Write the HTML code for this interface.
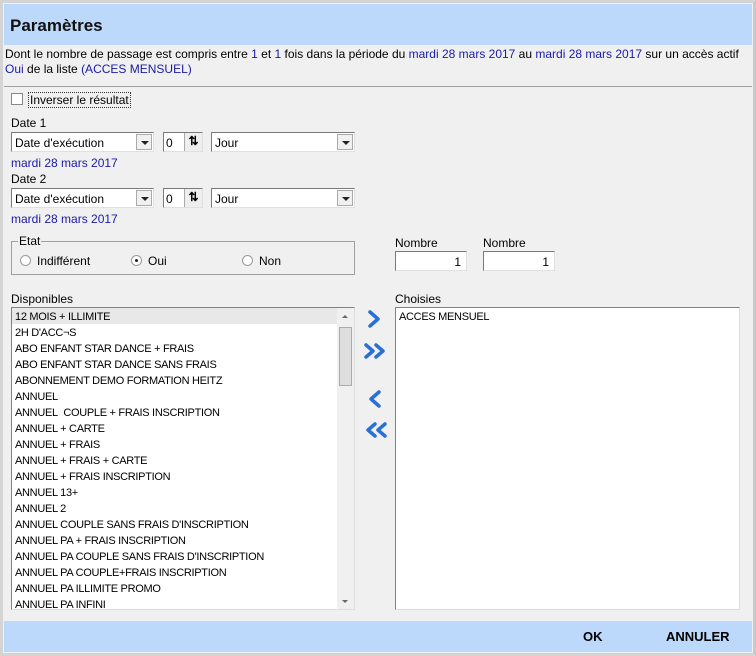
<!DOCTYPE html>
<html><head><meta charset="utf-8"><style>
*{margin:0;padding:0;box-sizing:border-box}
body{width:756px;height:656px;background:#f0f0f0;font-family:"Liberation Sans",sans-serif;font-size:11px;color:#000;position:relative;overflow:hidden}
.a{position:absolute}
.frame{left:0;top:0;width:756px;height:656px;border:3px solid #d4d4d4;border-right-color:#c8c8c8}
.hdr{left:4px;top:4px;width:748px;height:41px;background:#bcd9fb;font-size:17px;font-weight:bold;padding:12px 0 0 6px;color:#111}
.blue{color:#1a1aa8}
.combo{height:20px;background:#fff;border:1px solid #7a7a7a;border-right-color:#e0e0e0;border-bottom-color:#e0e0e0;padding:3px 3px 0;font-size:12px}
.combo .btn{position:absolute;right:1px;top:1px;width:16px;height:16px;background:#f0f0f0;border:1px solid #aaa}
.combo .btn:after{content:"";position:absolute;left:4px;top:6px;border:4px solid transparent;border-top:4px solid #222;border-bottom:0}
.lst{background:#fff;border:1px solid #828282;border-right-color:#ddd;border-bottom-color:#ddd;overflow:hidden}
.lst div{height:16px;line-height:18px;padding-left:3px;font-size:11px;letter-spacing:-0.3px;white-space:nowrap}
.inp{height:20px;background:#fff;border:1px solid #7a7a7a;border-right-color:#e0e0e0;border-bottom-color:#e0e0e0;text-align:right;padding:3px 5px 0;font-size:12px}
.rad{width:11px;height:11px;border:1px solid #9a9a9a;border-radius:50%;background:#fff}
.t{font-size:12px}
</style></head><body>
<div class="a frame"></div>
<div class="a hdr">Paramètres</div>
<div class="a t" style="left:5px;top:47px;width:750px;line-height:15px;white-space:nowrap">Dont le nombre de passage est compris entre <span class="blue">1</span> et <span class="blue">1</span> fois dans la période du <span class="blue">mardi 28 mars 2017</span> au <span class="blue">mardi 28 mars 2017</span> sur un accès actif<br><span class="blue">Oui</span> de la liste <span class="blue">(ACCES MENSUEL)</span></div>
<div class="a" style="left:4px;top:86px;width:748px;height:1px;background:#a0a0a0"></div>
<div class="a" style="left:11px;top:93px;width:12px;height:12px;border:1px solid #888;background:#fff"></div>
<div class="a t" style="left:28px;top:92px;border:1px dotted #333;padding:0 1px;line-height:14px">Inverser le résultat</div>

<div class="a t" style="left:11px;top:116px">Date 1</div>
<div class="a combo" style="left:11px;top:132px;width:143px">Date d'exécution<span class="btn"></span></div>
<div class="a combo" style="left:163px;top:132px;width:40px;padding-left:2px">0</div>
<div class="a" style="left:184px;top:133px;width:18px;height:18px;background:#eee;border-left:1px solid #aaa;font-size:12px;font-weight:bold;text-align:center;line-height:17px">⇅</div>
<div class="a combo" style="left:211px;top:132px;width:144px">Jour<span class="btn"></span></div>
<div class="a t blue" style="left:11px;top:156px">mardi 28 mars 2017</div>
<div class="a t" style="left:11px;top:172px">Date 2</div>
<div class="a combo" style="left:11px;top:188px;width:143px">Date d'exécution<span class="btn"></span></div>
<div class="a combo" style="left:163px;top:188px;width:40px;padding-left:2px">0</div>
<div class="a" style="left:184px;top:189px;width:18px;height:18px;background:#eee;border-left:1px solid #aaa;font-size:12px;font-weight:bold;text-align:center;line-height:17px">⇅</div>
<div class="a combo" style="left:211px;top:188px;width:144px">Jour<span class="btn"></span></div>
<div class="a t blue" style="left:11px;top:212px">mardi 28 mars 2017</div>

<div class="a" style="left:11px;top:241px;width:344px;height:34px;border:1px solid #a0a0a0"></div>
<div class="a t" style="left:18px;top:234px;background:#f0f0f0;padding:0 1px">Etat</div>
<div class="a rad" style="left:20px;top:255px"></div><div class="a t" style="left:37px;top:254px">Indifférent</div>
<div class="a rad" style="left:131px;top:255px"><div style="width:3px;height:3px;background:#222;border-radius:50%;margin:3px"></div></div><div class="a t" style="left:148px;top:254px">Oui</div>
<div class="a rad" style="left:242px;top:255px"></div><div class="a t" style="left:259px;top:254px">Non</div>

<div class="a t" style="left:395px;top:236px">Nombre</div>
<div class="a t" style="left:483px;top:236px">Nombre</div>
<div class="a inp" style="left:395px;top:251px;width:72px">1</div>
<div class="a inp" style="left:483px;top:251px;width:72px">1</div>

<div class="a t" style="left:11px;top:292px">Disponibles</div>
<div class="a t" style="left:395px;top:292px">Choisies</div>
<div class="a lst" style="left:11px;top:307px;width:344px;height:303px">
<div style="background:#e8e8e8">12 MOIS + ILLIMITE</div><div>2H D'ACC¬S</div><div>ABO ENFANT STAR DANCE + FRAIS</div><div>ABO ENFANT STAR DANCE SANS FRAIS</div><div>ABONNEMENT DEMO FORMATION HEITZ</div><div>ANNUEL</div><div>ANNUEL&nbsp; COUPLE + FRAIS INSCRIPTION</div><div>ANNUEL + CARTE</div><div>ANNUEL + FRAIS</div><div>ANNUEL + FRAIS + CARTE</div><div>ANNUEL + FRAIS INSCRIPTION</div><div>ANNUEL 13+</div><div>ANNUEL 2</div><div>ANNUEL COUPLE SANS FRAIS D'INSCRIPTION</div><div>ANNUEL PA + FRAIS INSCRIPTION</div><div>ANNUEL PA COUPLE SANS FRAIS D'INSCRIPTION</div><div>ANNUEL PA COUPLE+FRAIS INSCRIPTION</div><div>ANNUEL PA ILLIMITE PROMO</div><div>ANNUEL PA INFINI</div>
</div>
<div class="a" style="left:337px;top:308px;width:17px;height:301px;background:#f0f0f0"></div>
<div class="a" style="left:342px;top:315px;border:3px solid transparent;border-bottom:3px solid #666;border-top:0"></div>
<div class="a" style="left:339px;top:327px;width:13px;height:59px;background:#ddd;border:1px solid #aaa"></div>
<div class="a" style="left:342px;top:600px;border:3px solid transparent;border-top:3px solid #666;border-bottom:0"></div>
<div class="a lst" style="left:395px;top:307px;width:345px;height:303px"><div>ACCES MENSUEL</div></div>

<svg class="a" style="left:362px;top:308px" width="28" height="140" viewBox="0 0 28 140">
<g fill="none" stroke="#2a6fd6" stroke-width="3.5" stroke-linecap="round" stroke-linejoin="round">
<path d="M8 4 L16 11 L8 18"/>
<path d="M4 37 L11 43 L4 49 M14 37 L21 43 L14 49"/>
<path d="M17 84 L9 91 L17 98"/>
<path d="M13 116 L6 122 L13 128 M23 116 L16 122 L23 128"/>
</g></svg>

<div class="a" style="left:4px;top:621px;width:748px;height:31px;background:#bcd9fb"></div>
<div class="a" style="left:583px;top:629px;font-size:13px;font-weight:bold">OK</div>
<div class="a" style="left:666px;top:629px;font-size:13px;font-weight:bold">ANNULER</div>
</body></html>
